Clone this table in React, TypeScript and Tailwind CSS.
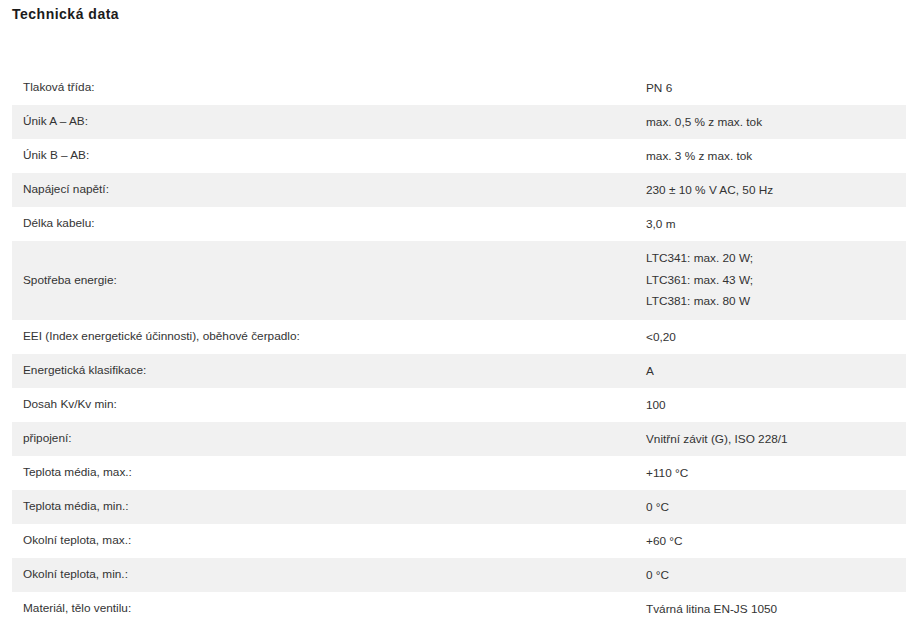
import React from 'react';

type Row = { label: string; value: string[] };

const rows: Row[] = [
	{ label: 'Tlaková třída:', value: ['PN 6'] },
	{ label: 'Únik A – AB:', value: ['max. 0,5 % z max. tok'] },
	{ label: 'Únik B – AB:', value: ['max. 3 % z max. tok'] },
	{ label: 'Napájecí napětí:', value: ['230 ± 10 % V AC, 50 Hz'] },
	{ label: 'Délka kabelu:', value: ['3,0 m'] },
	{ label: 'Spotřeba energie:', value: ['LTC341: max. 20 W;', 'LTC361: max. 43 W;', 'LTC381: max. 80 W'] },
	{ label: 'EEI (Index energetické účinnosti), oběhové čerpadlo:', value: ['<0,20'] },
	{ label: 'Energetická klasifikace:', value: ['A'] },
	{ label: 'Dosah Kv/Kv min:', value: ['100'] },
	{ label: 'připojení:', value: ['Vnitřní závit (G), ISO 228/1'] },
	{ label: 'Teplota média, max.:', value: ['+110 °C'] },
	{ label: 'Teplota média, min.:', value: ['0 °C'] },
	{ label: 'Okolní teplota, max.:', value: ['+60 °C'] },
	{ label: 'Okolní teplota, min.:', value: ['0 °C'] },
	{ label: 'Materiál, tělo ventilu:', value: ['Tvárná litina EN-JS 1050'] },
];

const App = () => {
	return (
		<div className="w-[906px] h-[626px] overflow-hidden bg-white font-['Liberation_Sans',Arial,sans-serif] text-[#333333]">
			<h2 className="pl-[12px] pt-[5px] text-[14px] leading-[18px] font-bold text-[#1b1b1b] tracking-[0.5px]">Technická data</h2>
			<table className="ml-[12px] mt-[48px] w-[894px] border-collapse text-[11.8px]">
				<tbody>
					{rows.map((row, index) => {
						const multi = row.value.length > 1;
						return (
							<tr key={row.label} className={index % 2 === 1 ? 'bg-[#f1f1f1]' : 'bg-white'}>
								<td className={`w-[623px] pl-[11px] align-middle ${multi ? 'h-[79px]' : 'h-[34px]'}`}>{row.label}</td>
								<td className="pl-[11px] align-middle">
									{row.value.map((line) => (
										<div key={line} className={multi ? 'leading-[21.5px]' : 'leading-[20px]'}>
											{line}
										</div>
									))}
								</td>
							</tr>
						);
					})}
				</tbody>
			</table>
		</div>
	);
};

export default App;
